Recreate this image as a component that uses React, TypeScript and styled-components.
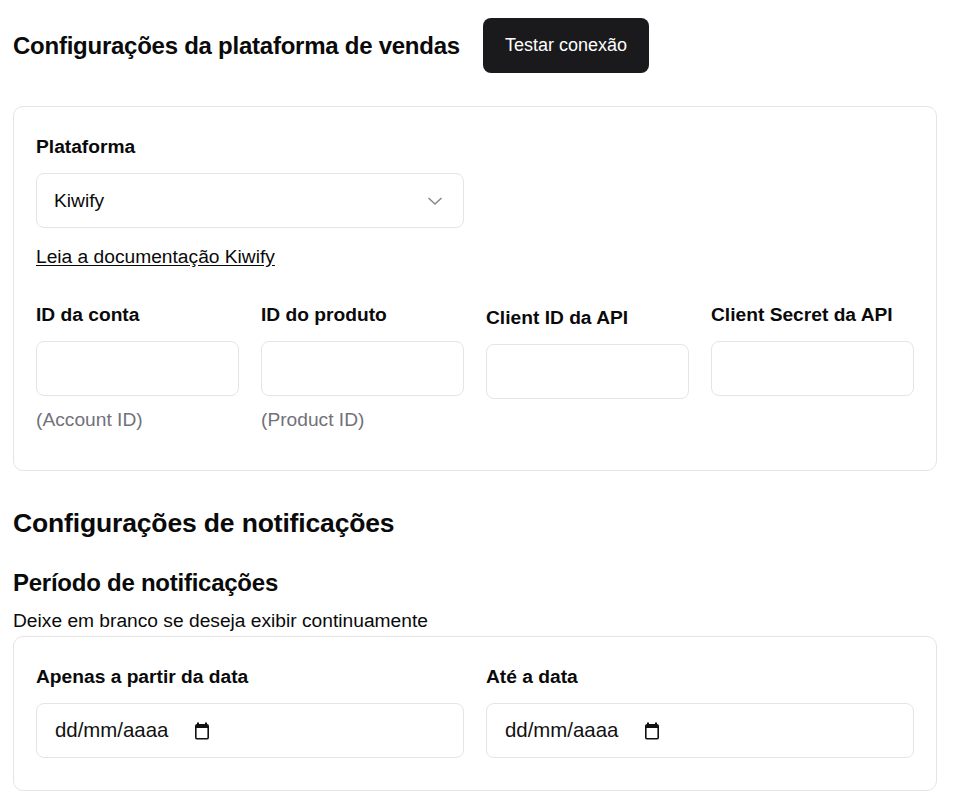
import React from 'react';
import styled, { createGlobalStyle } from 'styled-components';

const GlobalStyle = createGlobalStyle`
  html, body {
    margin: 0;
    padding: 0;
    background: #ffffff;
  }
  body {
    font-family: "Liberation Sans", Arial, sans-serif;
    color: #0a0a0a;
  }
  * {
    box-sizing: border-box;
  }
`;

const Page = styled.div`
  width: 924px;
  margin-left: 13px;
  padding: 18px 0 40px;
`;

const HeaderRow = styled.div`
  display: flex;
  align-items: center;
  gap: 23px;
  margin-bottom: 33px;
`;

const PageTitle = styled.h1`
  margin: 0;
  font-size: 24px;
  font-weight: 700;
  letter-spacing: -0.25px;
  line-height: 36px;
`;

const DarkButton = styled.button`
  height: 55px;
  padding: 0 22px;
  border: none;
  border-radius: 8px;
  background: #1a1a1c;
  color: #ffffff;
  font-family: inherit;
  font-size: 18px;
  letter-spacing: 0;
  cursor: pointer;
`;

const Card = styled.section`
  border: 1px solid #e5e5e5;
  border-radius: 10px;
  padding: 22px 22px 32px;
`;

const Grid = styled.div<{ $cols: number }>`
  display: grid;
  grid-template-columns: repeat(${(p) => p.$cols}, 1fr);
  column-gap: 22px;
`;

const Field = styled.div<{ $offset?: number }>`
  display: flex;
  flex-direction: column;
  padding-top: ${(p) => p.$offset ?? 0}px;
`;

const Label = styled.label`
  font-size: 19.2px;
  font-weight: 700;
  line-height: 36px;
  margin-bottom: 8px;
`;

const TextInput = styled.input`
  height: 55px;
  width: 100%;
  border: 1px solid #e5e5e5;
  border-radius: 8px;
  padding: 0 17px;
  font-family: inherit;
  font-size: 19.2px;
  outline: none;
`;

const SelectBox = styled.div`
  height: 55px;
  border: 1px solid #e5e5e5;
  border-radius: 8px;
  padding: 0 20px 0 17px;
  display: flex;
  align-items: center;
  justify-content: space-between;
  font-size: 19.2px;
`;

const DocLink = styled.a`
  display: inline-block;
  margin-top: 11px;
  margin-bottom: 22px;
  font-size: 19.2px;
  line-height: 36px;
  color: #0a0a0a;
  text-decoration: underline;
  text-underline-offset: 2px;
`;

const Hint = styled.div`
  margin-top: 6px;
  font-size: 19.2px;
  line-height: 36px;
  color: #71717a;
`;

const SectionTitle = styled.h2`
  margin: 34px 0 0;
  font-size: 26.5px;
  font-weight: 700;
  letter-spacing: -0.15px;
  line-height: 36px;
`;

const SubTitle = styled.h3`
  margin: 24px 0 0;
  font-size: 24px;
  font-weight: 700;
  letter-spacing: -0.25px;
  line-height: 36px;
`;

const Description = styled.p`
  margin: 6px 0 1px;
  font-size: 19.2px;
  line-height: 28px;
`;

const DateBox = styled.div`
  height: 55px;
  border: 1px solid #e5e5e5;
  border-radius: 8px;
  padding: 0 17px 0 18px;
  display: flex;
  align-items: center;
  gap: 26px;
  font-size: 20.4px;
  color: #111111;
`;

const Chevron = () => (
  <svg width="16" height="10" viewBox="0 0 16 10" fill="none">
    <path d="M1.5 2 L8 8 L14.5 2" stroke="#8a8a8a" strokeWidth="1.6" />
  </svg>
);

const CalendarIcon = () => (
  <svg width="16" height="18" viewBox="0 0 16 18" fill="none">
    <rect x="3" y="0.5" width="2" height="3" fill="#111" />
    <rect x="11" y="0.5" width="2" height="3" fill="#111" />
    <rect x="1.8" y="2.8" width="12.4" height="14" rx="1.4" stroke="#111" strokeWidth="1.6" />
    <rect x="1.8" y="2.8" width="12.4" height="3.2" fill="#111" />
  </svg>
);

const DateField = () => (
  <DateBox>
    <span>dd/mm/aaaa</span>
    <CalendarIcon />
  </DateBox>
);

export default function App() {
  return (
    <>
      <GlobalStyle />
      <Page>
        <HeaderRow>
          <PageTitle>Configurações da plataforma de vendas</PageTitle>
          <DarkButton>Testar conexão</DarkButton>
        </HeaderRow>

        <Card>
          <Grid $cols={2}>
            <Field>
              <Label>Plataforma</Label>
              <SelectBox>
                <span>Kiwify</span>
                <Chevron />
              </SelectBox>
            </Field>
          </Grid>
          <DocLink href="#">Leia a documentação Kiwify</DocLink>
          <Grid $cols={4}>
            <Field>
              <Label>ID da conta</Label>
              <TextInput />
              <Hint>(Account ID)</Hint>
            </Field>
            <Field>
              <Label>ID do produto</Label>
              <TextInput />
              <Hint>(Product ID)</Hint>
            </Field>
            <Field $offset={3}>
              <Label>Client ID da API</Label>
              <TextInput />
            </Field>
            <Field>
              <Label>Client Secret da API</Label>
              <TextInput />
            </Field>
          </Grid>
        </Card>

        <SectionTitle>Configurações de notificações</SectionTitle>
        <SubTitle>Período de notificações</SubTitle>
        <Description>Deixe em branco se deseja exibir continuamente</Description>

        <Card>
          <Grid $cols={2}>
            <Field>
              <Label>Apenas a partir da data</Label>
              <DateField />
            </Field>
            <Field>
              <Label>Até a data</Label>
              <DateField />
            </Field>
          </Grid>
        </Card>
      </Page>
    </>
  );
}
